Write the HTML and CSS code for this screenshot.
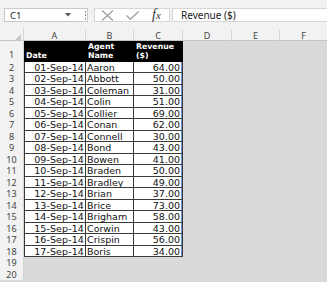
FILE: index.html
```html
<!DOCTYPE html>
<html lang="en">
<head>
    <meta charset="UTF-8">
    <title>Agent Revenue</title>
    <link rel="stylesheet" href="styles.css">
</head>
<body>
    <div class="toolbar">
        <div class="name-box">
            <span>C1</span>
            <svg class="caret" width="6" height="4" viewBox="0 0 6 4"><path d="M0 0h6L3 3.5z" fill="#555"/></svg>
        </div>
        <svg class="grip" width="3" height="10" viewBox="0 0 3 10">
            <rect x="1" y="1" width="1" height="1.5" fill="#777"/>
            <rect x="1" y="4.5" width="1" height="1.5" fill="#777"/>
            <rect x="1" y="8" width="1" height="1.5" fill="#777"/>
        </svg>
        <div class="fx-buttons">
            <svg width="13" height="11" viewBox="0 0 13 11"><path d="M1 0.5L12 10.5M12 0.5L1 10.5" stroke="#9a9a9a" stroke-width="1.1" fill="none"/></svg>
            <svg width="13" height="9" viewBox="0 0 13 9"><path d="M0.5 4.5L4.5 8.3L12.5 0.5" stroke="#9a9a9a" stroke-width="1.2" fill="none"/></svg>
            <span class="fx">f<small>x</small></span>
        </div>
        <div class="formula">Revenue ($)</div>
    </div>

    <div class="sheet">
        <div class="row col-head">
            <div class="corner"><svg width="6" height="6" viewBox="0 0 6 6"><path d="M6 0V6H0z" fill="#c8c8c8"/></svg></div>
            <div>A</div><div>B</div><div>C</div><div>D</div><div>E</div><div class="last">F</div>
        </div>

        <div class="row head-row">
            <div class="num">1</div>
            <div class="th">Date</div>
            <div class="th">Agent<br>Name</div>
            <div class="th">Revenue<br>($)</div>
        </div>

        <div id="rows"></div>

        <div class="row"><div class="num">19</div></div>
        <div class="row"><div class="num">20</div></div>
    </div>

    <script>
    document.addEventListener('DOMContentLoaded', () => {
        const data = [
            ['01-Sep-14', 'Aaron', '64.00'],
            ['02-Sep-14', 'Abbott', '50.00'],
            ['03-Sep-14', 'Coleman', '31.00'],
            ['04-Sep-14', 'Colin', '51.00'],
            ['05-Sep-14', 'Collier', '69.00'],
            ['06-Sep-14', 'Conan', '62.00'],
            ['07-Sep-14', 'Connell', '30.00'],
            ['08-Sep-14', 'Bond', '43.00'],
            ['09-Sep-14', 'Bowen', '41.00'],
            ['10-Sep-14', 'Braden', '50.00'],
            ['11-Sep-14', 'Bradley', '49.00'],
            ['12-Sep-14', 'Brian', '37.00'],
            ['13-Sep-14', 'Brice', '73.00'],
            ['14-Sep-14', 'Brigham', '58.00'],
            ['15-Sep-14', 'Corwin', '43.00'],
            ['16-Sep-14', 'Crispin', '56.00'],
            ['17-Sep-14', 'Boris', '34.00']
        ];

        const holder = document.getElementById('rows');
        data.forEach((r, i) => {
            const row = document.createElement('div');
            row.className = 'row';
            row.innerHTML =
                `<div class="num">${i + 2}</div>` +
                `<div class="td date">${r[0]}</div>` +
                `<div class="td">${r[1]}</div>` +
                `<div class="td amount">${r[2]}</div>`;
            holder.appendChild(row);
        });
    });
    </script>
</body>
</html>
```

FILE: styles.css
```css
:root {
    --cols: 24px 62px 48px 49px 49px 48px 1fr;
    --grid-line: #3a3a3a;
    --head-bg: #f2f2f2;
    --sheet-bg: #d9d9d9;
    --row-h: 11.53px;
}

body {
    margin: 0;
    background: var(--sheet-bg);
    font-family: "DejaVu Sans", Verdana, sans-serif;
    overflow: hidden;
}

/* formula bar */
.toolbar {
    height: 28px;
    background: var(--head-bg);
    box-sizing: border-box;
    padding: 8px 0 6px 4px;
    display: flex;
    align-items: stretch;
}

.name-box {
    width: 84px;
    box-sizing: border-box;
    background: #fff;
    border: 1px solid #c9c9c9;
    display: flex;
    align-items: center;
    justify-content: space-between;
    padding: 0 16px 0 5px;
    font-family: "Noto Sans", sans-serif;
    font-size: 9.5px;
    color: #222;
}

.grip {
    align-self: center;
    margin: 0 7px 0 -4px;
}

.fx-buttons {
    width: 76px;
    box-sizing: border-box;
    background: #fff;
    border: 1px solid #d6d6d6;
    display: flex;
    align-items: center;
    padding-left: 6px;
    gap: 12px;
}

.fx {
    font-family: "Liberation Serif", serif;
    font-style: italic;
    font-size: 14px;
    color: #333;
    line-height: 1;
    margin-left: 1px;
}

.fx small {
    font-size: 11px;
}

.formula {
    flex: 1;
    margin-left: 2px;
    background: #fff;
    border: 1px solid #d6d6d6;
    border-right: none;
    padding-left: 8px;
    font-family: "Noto Sans", sans-serif;
    font-size: 10px;
    color: #222;
    display: flex;
    align-items: center;
}

/* sheet */
.row {
    display: grid;
    grid-template-columns: var(--cols);
    height: var(--row-h);
}

.num {
    background: var(--head-bg);
    border-right: 1px solid #d4d4d4;
    box-sizing: border-box;
    text-align: center;
    font-family: "Noto Sans", sans-serif;
    font-size: 9px;
    line-height: var(--row-h);
    color: #444;
}

.col-head {
    height: 13px;
    background: var(--head-bg);
    border-bottom: 1px solid #c4c4c4;
    box-sizing: border-box;
}

.col-head div {
    border-right: 1px solid #d6d6d6;
    text-align: center;
    font-family: "Noto Sans", sans-serif;
    font-size: 9px;
    line-height: 12px;
    color: #444;
    margin-top: 2px;
}

.col-head .last {
    border-right: none;
}

.col-head .corner {
    display: flex;
    justify-content: flex-end;
    align-items: flex-end;
    padding: 0 2px 2px 0;
    margin-top: 0;
}

.head-row {
    height: 20.5px;
}

.head-row .num {
    line-height: normal;
    display: flex;
    align-items: flex-end;
    justify-content: center;
    padding-bottom: 1px;
}

.th {
    background: #000;
    color: #fff;
    font-weight: bold;
    font-size: 7.8px;
    line-height: 9.5px;
    padding: 0 0 1px 2px;
    display: flex;
    align-items: flex-end;
}

.td {
    background: #fff;
    box-sizing: border-box;
    border-right: 1px solid var(--grid-line);
    border-bottom: 1px solid var(--grid-line);
    font-size: 9.5px;
    line-height: 11px;
    color: #111;
    padding-left: 1px;
    white-space: nowrap;
    overflow: hidden;
}

.td.date {
    border-left: 1px solid var(--grid-line);
    text-align: right;
    padding-right: 1px;
    letter-spacing: 0.1px;
}

.td.amount {
    text-align: right;
    padding-right: 2px;
    box-shadow: inset -1px 0 0 #6f8fd6;
}
```
